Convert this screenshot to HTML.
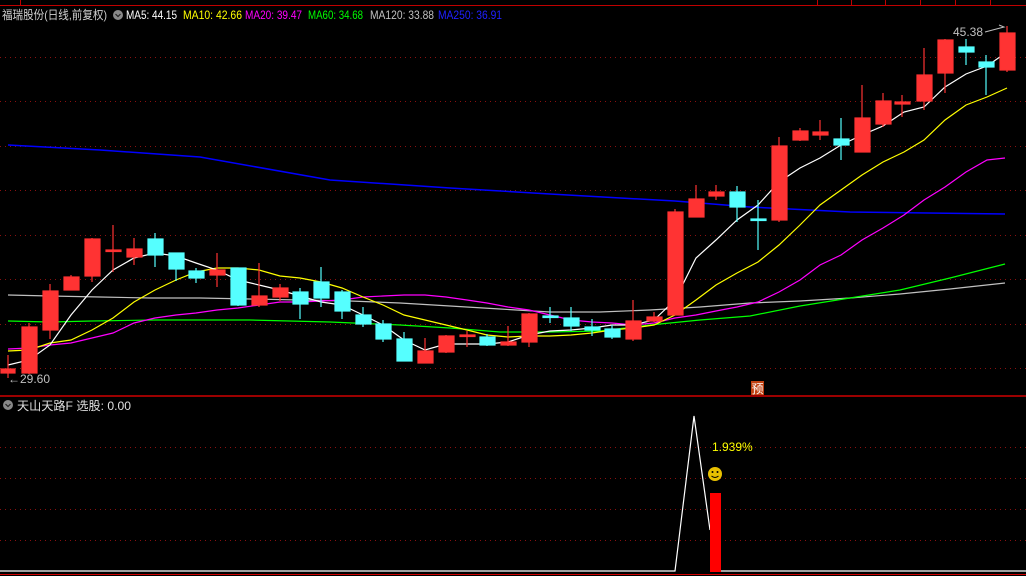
<!DOCTYPE html>
<html><head><meta charset="utf-8"><style>
html,body{margin:0;padding:0;background:#000;width:1026px;height:576px;overflow:hidden}
svg{display:block}
text{font-family:"Liberation Sans","Noto Sans CJK SC",sans-serif;font-size:12px}
</style></head><body>
<svg width="1026" height="576" viewBox="0 0 1026 576" xmlns="http://www.w3.org/2000/svg">
<rect width="1026" height="576" fill="#000"/>
<!-- top bar -->
<line x1="0" y1="5.5" x2="1026" y2="5.5" stroke="#c00000"/>
<line x1="20.5" y1="0" x2="20.5" y2="5" stroke="#c00000"/>
<g stroke="#c00000"><line x1="817.5" y1="0" x2="817.5" y2="5"/><line x1="851.5" y1="0" x2="851.5" y2="5"/><line x1="885.5" y1="0" x2="885.5" y2="5"/><line x1="920.5" y1="0" x2="920.5" y2="5"/><line x1="955.5" y1="0" x2="955.5" y2="5"/><line x1="990.5" y1="0" x2="990.5" y2="5"/></g>
<!-- grid -->
<g stroke="#8a1010" stroke-dasharray="1,4">
<line x1="0" y1="57.5" x2="1026" y2="57.5"/><line x1="0" y1="101.5" x2="1026" y2="101.5"/>
<line x1="0" y1="146.5" x2="1026" y2="146.5"/><line x1="0" y1="190.5" x2="1026" y2="190.5"/>
<line x1="0" y1="235.5" x2="1026" y2="235.5"/><line x1="0" y1="279.5" x2="1026" y2="279.5"/>
<line x1="0" y1="324.5" x2="1026" y2="324.5"/><line x1="0" y1="368.5" x2="1026" y2="368.5"/>
<line x1="0" y1="447.5" x2="1026" y2="447.5"/><line x1="0" y1="478.5" x2="1026" y2="478.5"/>
<line x1="0" y1="509.5" x2="1026" y2="509.5"/><line x1="0" y1="540.5" x2="1026" y2="540.5"/>
</g>
<line x1="0" y1="396" x2="1026" y2="396" stroke="#d00000" stroke-width="1.5"/>
<line x1="0" y1="574.5" x2="1026" y2="574.5" stroke="#d00000"/>
<!-- MAs -->
<g fill="none" stroke-width="1.2">
<polyline stroke="#0000ff" stroke-width="1.5" points="8,145 100,150 200,157 330,180 450,188 550,194 675,201 750,207 850,212 1005,214"/>
<polyline stroke="#c0c0c0" points="8,295 50,296 100,297 150,298 200,298 250,299 300,300 350,301 400,303 450,306 500,309 550,312 600,312 650,310 700,307 750,303 800,301 850,298 900,294 950,289 1005,283"/>
<polyline stroke="#00ff00" points="8,321 50,322 92,321 155,320 250,320 330,322 400,325 450,328 500,332 550,332 600,331 650,325 700,320 750,316 800,306 850,298 900,290 950,278 1005,264"/>
<polyline stroke="#ff00ff" points="8,349 29,348 50,345 71,343 92,338 113,333 134,323 155,318 176,315 196,313 217,310 238,308 259,305 280,302 300,302 321,301 342,300 363,297 383,296 404,295 425,295 446,297 467,300 487,303 508,307 529,310 550,315 571,320 592,322 612,323 633,325 654,323 675,318 696,315 716,311 737,307 758,302 779,292 800,280 820,265 841,255 862,240 883,228 904,215 924,200 945,187 966,172 987,160 1005,158"/>
<polyline stroke="#ffff00" points="8,351 29,350 50,343 71,340 92,330 113,318 134,302 155,290 176,280 196,272 217,268 238,268 259,270 280,276 300,278 321,282 342,288 363,297 383,305 404,315 425,320 446,325 467,330 487,335 508,337 529,336 550,336 571,335 592,333 612,330 633,328 654,325 675,315 696,300 716,285 737,273 758,262 779,245 800,225 820,205 841,190 862,175 883,162 904,152 924,140 945,120 966,105 987,97 1007,88"/>
<polyline stroke="#ffffff" points="8,365 29,360 50,345 71,315 92,290 113,270 134,258 155,253 176,256 196,263 217,270 238,280 259,285 280,290 300,296 321,302 342,305 363,315 383,325 404,340 425,350 446,344 467,344 487,344 508,342 529,335 550,331 571,330 592,328 612,325 633,325 654,320 675,300 696,258 716,240 737,220 758,205 779,182 800,168 820,158 841,145 862,135 883,126 904,112 924,107 945,87 966,74 987,66 1007,52"/>
</g>
<!-- candles -->
<g stroke-width="1.2">
<g stroke="#ff3333" fill="#ff3333">
<line x1="8" y1="355" x2="8" y2="378"/><rect x="1" y="369" width="14" height="4"/>
<line x1="29" y1="323" x2="29" y2="374"/><rect x="22" y="327" width="15" height="46"/>
<line x1="50" y1="284" x2="50" y2="339"/><rect x="43" y="291" width="15" height="39"/>
<line x1="71" y1="275" x2="71" y2="290"/><rect x="64" y="277" width="15" height="13"/>
<line x1="92" y1="238" x2="92" y2="282"/><rect x="85" y="239" width="15" height="37"/>
<line x1="113" y1="225" x2="113" y2="272"/><rect x="106" y="250" width="15" height="1.5"/>
<line x1="134" y1="238" x2="134" y2="265"/><rect x="127" y="249" width="15" height="8"/>
<line x1="217" y1="253" x2="217" y2="287"/><rect x="210" y="270" width="15" height="5"/>
<line x1="259" y1="263" x2="259" y2="307"/><rect x="252" y="296" width="15" height="9"/>
<line x1="280" y1="284" x2="280" y2="301"/><rect x="273" y="288" width="15" height="9"/>
<line x1="425" y1="338" x2="425" y2="363"/><rect x="418" y="351" width="15" height="12"/>
<line x1="446" y1="335" x2="446" y2="353"/><rect x="439" y="336" width="15" height="16"/>
<line x1="467" y1="331" x2="467" y2="347"/><rect x="460" y="335" width="15" height="1.5"/>
<line x1="508" y1="326" x2="508" y2="346"/><rect x="501" y="342" width="15" height="3"/>
<line x1="529" y1="313" x2="529" y2="347"/><rect x="522" y="314" width="15" height="28"/>
<line x1="633" y1="300" x2="633" y2="341"/><rect x="626" y="321" width="15" height="18"/>
<line x1="654" y1="312" x2="654" y2="322"/><rect x="647" y="317" width="15" height="4"/>
<line x1="675" y1="209" x2="675" y2="315"/><rect x="668" y="212" width="15" height="103"/>
<line x1="696" y1="185" x2="696" y2="217"/><rect x="689" y="199" width="15" height="18"/>
<line x1="716" y1="185" x2="716" y2="200"/><rect x="709" y="192" width="15" height="4"/>
<line x1="779" y1="137" x2="779" y2="222"/><rect x="772" y="146" width="15" height="74"/>
<line x1="800" y1="128" x2="800" y2="141"/><rect x="793" y="131" width="15" height="9"/>
<line x1="820" y1="120" x2="820" y2="140"/><rect x="813" y="132" width="15" height="3"/>
<line x1="862" y1="85" x2="862" y2="152"/><rect x="855" y="118" width="15" height="34"/>
<line x1="883" y1="93" x2="883" y2="127"/><rect x="876" y="101" width="15" height="23"/>
<line x1="902" y1="95" x2="902" y2="117"/><rect x="895" y="102" width="15" height="2"/>
<line x1="924" y1="48" x2="924" y2="110"/><rect x="917" y="75" width="15" height="26"/>
<line x1="945" y1="39" x2="945" y2="93"/><rect x="938" y="40" width="15" height="33"/>
<line x1="1007" y1="26" x2="1007" y2="72"/><rect x="1000" y="33" width="15" height="37"/>
</g>
<g stroke="#55ffff" fill="#55ffff">
<line x1="155" y1="233" x2="155" y2="267"/><rect x="148" y="239" width="15" height="16"/>
<line x1="176" y1="253" x2="176" y2="281"/><rect x="169" y="253" width="15" height="16"/>
<line x1="196" y1="268" x2="196" y2="283"/><rect x="189" y="271" width="15" height="7"/>
<line x1="238" y1="268" x2="238" y2="306"/><rect x="231" y="268" width="15" height="37"/>
<line x1="300" y1="288" x2="300" y2="319"/><rect x="293" y="292" width="15" height="12"/>
<line x1="321" y1="267" x2="321" y2="307"/><rect x="314" y="282" width="15" height="16"/>
<line x1="342" y1="290" x2="342" y2="319"/><rect x="335" y="292" width="15" height="19"/>
<line x1="363" y1="307" x2="363" y2="327"/><rect x="356" y="315" width="15" height="9"/>
<line x1="383" y1="320" x2="383" y2="342"/><rect x="376" y="324" width="15" height="15"/>
<line x1="404" y1="332" x2="404" y2="361"/><rect x="397" y="339" width="15" height="22"/>
<line x1="487" y1="334" x2="487" y2="346"/><rect x="480" y="337" width="15" height="8"/>
<line x1="550" y1="307" x2="550" y2="323"/><rect x="543" y="316" width="15" height="1.5"/>
<line x1="571" y1="307" x2="571" y2="331"/><rect x="564" y="318" width="15" height="8"/>
<line x1="592" y1="319" x2="592" y2="336"/><rect x="585" y="327" width="15" height="3"/>
<line x1="612" y1="325" x2="612" y2="339"/><rect x="605" y="329" width="15" height="8"/>
<line x1="737" y1="186" x2="737" y2="222"/><rect x="730" y="192" width="15" height="15"/>
<line x1="758" y1="200" x2="758" y2="250"/><rect x="751" y="219" width="15" height="1.5"/>
<line x1="841" y1="118" x2="841" y2="160"/><rect x="834" y="139" width="15" height="6"/>
<line x1="966" y1="39" x2="966" y2="65"/><rect x="959" y="47" width="15" height="5"/>
<line x1="986" y1="55" x2="986" y2="95"/><rect x="979" y="62" width="15" height="5"/>
</g>
</g>
<!-- price labels -->
<text x="8" y="383" fill="#c0c0c0">←29.60</text>
<text x="953" y="36" fill="#c0c0c0">45.38</text>
<polyline points="985,32 1004,27 999,25" fill="none" stroke="#c0c0c0"/>
<!-- 预 -->
<rect x="751" y="381" width="13" height="14" fill="#c04010"/>
<text x="751.5" y="393" fill="#fff" font-size="12">预</text>
<!-- header -->
<text x="2" y="19" fill="#d0d0d0" font-size="13" textLength="105" lengthAdjust="spacingAndGlyphs">福瑞股份(日线,前复权)</text>
<circle cx="118" cy="15" r="5" fill="#888"/>
<polyline points="115.5,14 118,16.5 120.5,14" fill="none" stroke="#222" stroke-width="1.2"/>
<text x="126" y="19" fill="#ffffff" textLength="51" lengthAdjust="spacingAndGlyphs">MA5: 44.15</text>
<text x="183" y="19" fill="#ffff00" textLength="59" lengthAdjust="spacingAndGlyphs">MA10: 42.66</text>
<text x="245" y="19" fill="#ff00ff" textLength="57" lengthAdjust="spacingAndGlyphs">MA20: 39.47</text>
<text x="308" y="19" fill="#00ff00" textLength="55" lengthAdjust="spacingAndGlyphs">MA60: 34.68</text>
<text x="370" y="19" fill="#c0c0c0" textLength="64" lengthAdjust="spacingAndGlyphs">MA120: 33.88</text>
<text x="438" y="19" fill="#2020ff" textLength="64" lengthAdjust="spacingAndGlyphs">MA250: 36.91</text>
<!-- lower panel -->
<circle cx="8" cy="405" r="5" fill="#888"/>
<polyline points="5.5,404 8,406.5 10.5,404" fill="none" stroke="#222" stroke-width="1.2"/>
<text x="17" y="410" fill="#e0e0e0" textLength="114" lengthAdjust="spacingAndGlyphs">天山天路F 选股: 0.00</text>
<polyline points="0,571 675,571 694,416 710,530" fill="none" stroke="#fff" stroke-width="1.2"/>
<line x1="721" y1="571" x2="1026" y2="571" stroke="#fff" stroke-width="1.2"/>
<rect x="710" y="493" width="11" height="79" fill="#ff0000"/>
<text x="712" y="451" fill="#ffff00">1.939%</text>
<circle cx="715" cy="474" r="7" fill="#e8c000"/>
<circle cx="712.5" cy="472" r="1" fill="#000"/><circle cx="717.5" cy="472" r="1" fill="#000"/>
<path d="M711.5,476 Q715,479 718.5,476" fill="none" stroke="#000" stroke-width="1"/>
</svg>
</body></html>
